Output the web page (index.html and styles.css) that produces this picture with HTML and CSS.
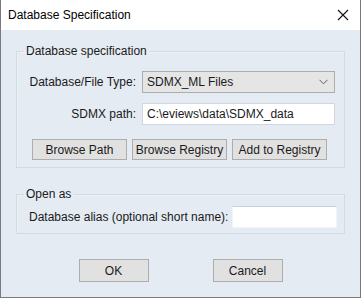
FILE: index.html
```html
<!DOCTYPE html>
<html lang="en">
<head>
    <meta charset="UTF-8">
    <title>Database Specification</title>
    <link rel="stylesheet" href="styles.css">
</head>
<body>
    <div class="window">
        <div class="titlebar">
            <span class="title">Database Specification</span>
            <svg class="close" width="12" height="12" viewBox="0 0 12 12">
                <path d="M1 1 L11 11 M11 1 L1 11" stroke="#111" stroke-width="1.1" fill="none"/>
            </svg>
        </div>

        <div class="client">
            <!-- 数据库设置 -->
            <fieldset class="group spec">
                <legend>Database specification</legend>
                <div class="form-grid">
                    <label>Database/File Type:</label>
                    <div class="select">
                        <span>SDMX_ML Files</span>
                        <svg width="9" height="6" viewBox="0 0 9 6">
                            <path d="M0.5 0.8 L4.5 4.8 L8.5 0.8" stroke="#606060" stroke-width="1" fill="none"/>
                        </svg>
                    </div>
                    <label>SDMX path:</label>
                    <input type="text" class="text" value="C:\eviews\data\SDMX_data">
                </div>
                <div class="btn-row">
                    <button>Browse Path</button>
                    <button>Browse Registry</button>
                    <button>Add to Registry</button>
                </div>
            </fieldset>

            <fieldset class="group open">
                <legend>Open as</legend>
                <div class="alias-row">
                    <label>Database alias (optional short name):</label>
                    <input type="text" class="text alias" value="">
                </div>
            </fieldset>

            <div class="actions">
                <button class="action">OK</button>
                <button class="action">Cancel</button>
            </div>
        </div>
    </div>
</body>
</html>
```

FILE: styles.css
```css
* {
    box-sizing: border-box;
}
body {
    margin: 0;
    font-family: "Liberation Sans", Arial, sans-serif;
    font-size: 12px;
    color: #1a1a1a;
    background-color: #e4ebf3;
}
.window {
    width: 361px;
    height: 298px;
    border: 1px solid #7a7a7a;
    border-top: none;
    display: flex;
    flex-direction: column;
    background-color: #e4ebf3;
}
.titlebar {
    height: 30px;
    flex-shrink: 0;
    background-color: #fff;
    display: flex;
    align-items: center;
    justify-content: space-between;
    padding: 0 11px 1px 7px;
}
.title {
    font-size: 12px;
    color: #000;
}
.client {
    flex: 1;
    display: flex;
    flex-direction: column;
}
.group {
    margin: 0 15px 0 15px;
    padding: 0;
    min-width: 0;
    border: 1px solid #d2dae4;
    box-shadow: inset 1px 1px 0 #eef2f7;
}
.group legend {
    margin-left: 7px;
    padding: 0 2px;
    line-height: 14px;
}
.spec {
    margin-top: 14px;
}
.form-grid {
    display: grid;
    grid-template-columns: 1fr 193px;
    column-gap: 6px;
    row-gap: 10px;
    align-items: center;
    padding: 13px 9px 0 10px;
}
.form-grid label {
    text-align: right;
}
.select {
    height: 22px;
    background-color: #e5e5e5;
    border: 1px solid #adadad;
    display: flex;
    align-items: center;
    justify-content: space-between;
    padding: 0 6px 0 4px;
}
.text {
    height: 22px;
    font: inherit;
    color: #1a1a1a;
    background-color: #fff;
    border: 1px solid #cfd7e1;
    padding: 0 4px;
    outline: none;
}
.btn-row {
    display: flex;
    gap: 5px;
    padding: 14px 0 7px 15px;
}
button {
    font: inherit;
    color: #1a1a1a;
    background-color: #e1e1e1;
    border: 1px solid #adadad;
    padding: 0;
}
.btn-row button {
    width: 95px;
    height: 21px;
}
.open {
    margin-top: 19px;
}
.alias-row {
    display: flex;
    align-items: center;
    justify-content: space-between;
    padding: 5px 7px 5px 12px;
}
.alias {
    width: 105px;
    border-color: #f2f4f7;
    border-top-color: #c9d0d8;
}
.actions {
    display: flex;
    justify-content: center;
    gap: 64px;
    margin-top: 25px;
}
.action {
    width: 70px;
    height: 23px;
}
```
